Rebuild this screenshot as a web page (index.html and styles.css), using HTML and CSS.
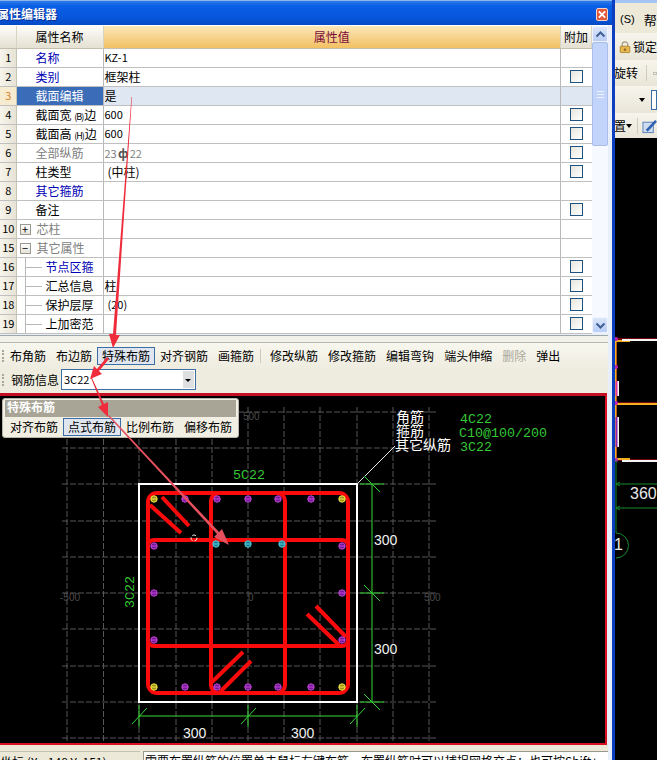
FILE: index.html
```html
<!DOCTYPE html>
<html lang="zh-CN">
<head>
  <meta charset="UTF-8" />
  <title>属性编辑器</title>
  <link rel="stylesheet" href="styles.css">
</head>
<body>

  <div class="editor">
    <div class="titlebar">
      <span class="title-text">属性编辑器</span>
      <span class="close-btn">
        <svg width="11" height="11" viewBox="0 0 11 11"><path d="M2 2L9 9M9 2L2 9" stroke="#fff" stroke-width="2" fill="none"/></svg>
      </span>
    </div>

    <div class="editor-body">
      <div class="grid">
        <table class="props">
          <colgroup>
            <col class="c-num"><col class="c-name"><col class="c-value"><col class="c-extra">
          </colgroup>
          <thead>
            <tr>
              <th></th>
              <th>属性名称</th>
              <th class="th-value">属性值</th>
              <th>附加</th>
            </tr>
          </thead>
          <tbody>
            <tr><td class="num">1</td><td class="name link">名称</td><td class="latin">KZ-1</td><td></td></tr>
            <tr><td class="num">2</td><td class="name link">类别</td><td>框架柱</td><td class="chk"><span class="box"></span></td></tr>
            <tr class="current"><td class="num">3</td><td class="name">截面编辑</td><td>是</td><td></td></tr>
            <tr><td class="num">4</td><td class="name">截面宽 <span class="squeezed">(B)</span>边</td><td class="latin">600</td><td class="chk"><span class="box"></span></td></tr>
            <tr><td class="num">5</td><td class="name">截面高 <span class="squeezed">(H)</span>边</td><td class="latin">600</td><td class="chk"><span class="box"></span></td></tr>
            <tr class="muted"><td class="num">6</td><td class="name">全部纵筋</td><td class="latin">23<span class="bar-mark">ф</span>22</td><td class="chk"><span class="box"></span></td></tr>
            <tr><td class="num">7</td><td class="name">柱类型</td><td><span class="paren">(中柱)</span></td><td class="chk"><span class="box"></span></td></tr>
            <tr><td class="num">8</td><td class="name link">其它箍筋</td><td></td><td></td></tr>
            <tr><td class="num">9</td><td class="name">备注</td><td></td><td class="chk"><span class="box"></span></td></tr>
            <tr class="muted"><td class="num">10</td><td class="name"><span class="toggle">+</span>芯柱</td><td></td><td></td></tr>
            <tr class="muted"><td class="num">15</td><td class="name"><span class="toggle">−</span>其它属性</td><td></td><td></td></tr>
            <tr><td class="num">16</td><td class="name sub link">节点区箍</td><td></td><td class="chk"><span class="box"></span></td></tr>
            <tr><td class="num">17</td><td class="name sub">汇总信息</td><td>柱</td><td class="chk"><span class="box"></span></td></tr>
            <tr><td class="num">18</td><td class="name sub">保护层厚</td><td class="latin"><span class="paren">(20)</span></td><td class="chk"><span class="box"></span></td></tr>
            <tr><td class="num">19</td><td class="name sub">上加密范</td><td></td><td class="chk"><span class="box"></span></td></tr>
          </tbody>
        </table>

        <div class="scrollbar">
          <div class="sb-btn">
            <svg width="11" height="7" viewBox="0 0 11 7"><path d="M1.5 5.5L5.5 1.5L9.5 5.5" stroke="#3f5f95" stroke-width="2" fill="none"/></svg>
          </div>
          <div class="sb-thumb"><span class="sb-grip"></span></div>
          <div class="sb-track"></div>
          <div class="sb-btn">
            <svg width="11" height="7" viewBox="0 0 11 7"><path d="M1.5 1.5L5.5 5.5L9.5 1.5" stroke="#3f5f95" stroke-width="2" fill="none"/></svg>
          </div>
        </div>
      </div>

      <div class="splitter"></div>

      <div class="toolbar">
        <span class="grip"></span>
        <span class="tool">布角筋</span>
        <span class="tool">布边筋</span>
        <span class="tool active">特殊布筋</span>
        <span class="tool">对齐钢筋</span>
        <span class="tool">画箍筋</span>
        <span class="tool-sep"></span>
        <span class="tool">修改纵筋</span>
        <span class="tool">修改箍筋</span>
        <span class="tool">编辑弯钩</span>
        <span class="tool">端头伸缩</span>
        <span class="tool disabled">删除</span>
        <span class="tool">弹出</span>
      </div>
      <div class="toolbar toolbar-info">
        <span class="grip"></span>
        <span class="info-label">钢筋信息</span>
        <span class="combo">
          <span class="combo-value">3C22</span>
          <span class="combo-arrow"></span>
        </span>
      </div>

      <div class="canvas">
        <svg class="drawing" width="605" height="347" viewBox="0 396 605 347">
          <defs>
            <g id="bar"><circle r="3.2"/><path d="M-3 0H3"/></g>
          </defs>

          <g class="axis-grid">
            <path d="M67 407V743M103.500 407V743M139 407V743M176 407V743M212 407V743M248 407V743M284 407V743M320 407V743M357 407V743M393 407V743M429 407V743"/>
            <path d="M62 412H436M62 448H436M62 484H436M62 521H436M62 557H436M62 593H436M62 629H436M62 666H436M62 702H436M62 738H436"/>
          </g>
          <text class="axis-label" x="60" y="601">-500</text>
          <text class="axis-label" x="424" y="601">500</text>
          <text class="axis-label" x="243" y="420">500</text>
          <text class="axis-label" x="248" y="601">0</text>

          <rect class="outline" x="139" y="484" width="218" height="218"/>
          <path class="leader" d="M357 484L395 446"/>

          <g class="dim">
            <path d="M372 484V702M360 484H384M360 593H384M360 702H384M364 476L380 492M364 585L380 601M364 694L380 710"/>
            <path d="M139 716H357M139 705V727M248 705V727M357 705V727M132 724L147 708M241 724L256 708M350 724L365 708"/>
          </g>

          <g class="stirrup">
            <rect x="148" y="493" width="200" height="200" rx="9"/>
            <rect x="211" y="493" width="74" height="200" rx="8"/>
            <rect x="148" y="540" width="200" height="106" rx="6"/>
            <path d="M150 505L181 533M162 497L189 526"/>
            <path d="M307 614L339 645M316 606L346 637"/>
            <path d="M212 682L243 652M220 692L251 661"/>
          </g>

          <g class="bars-side">
            <use href="#bar" x="185" y="499"/><use href="#bar" x="217" y="499"/><use href="#bar" x="248" y="499"/>
            <use href="#bar" x="278" y="499"/><use href="#bar" x="311" y="499"/>
            <use href="#bar" x="185" y="687"/><use href="#bar" x="217" y="687"/><use href="#bar" x="248" y="687"/>
            <use href="#bar" x="278" y="687"/><use href="#bar" x="311" y="687"/>
            <use href="#bar" x="154" y="546"/><use href="#bar" x="154" y="593"/><use href="#bar" x="154" y="640"/>
            <use href="#bar" x="342" y="546"/><use href="#bar" x="342" y="593"/><use href="#bar" x="342" y="640"/>
          </g>
          <g class="bars-corner">
            <use href="#bar" x="154" y="499"/><use href="#bar" x="342" y="499"/>
            <use href="#bar" x="154" y="687"/><use href="#bar" x="342" y="687"/>
          </g>
          <g class="bars-new">
            <use href="#bar" x="216" y="544"/><use href="#bar" x="248" y="544"/><use href="#bar" x="282" y="544"/>
          </g>
          <circle class="cursor-mark" cx="194" cy="538" r="3"/>

          <text class="dim-text" x="183" y="738">300</text>
          <text class="dim-text" x="291" y="738">300</text>
          <text class="dim-text" x="374" y="545">300</text>
          <text class="dim-text" x="374" y="654">300</text>
          <text class="legend-value" x="233" y="479">5C22</text>
          <text class="legend-value" transform="translate(134 608) rotate(-90)">3C22</text>

          <text class="legend" x="396" y="422">角筋</text>
          <text class="legend" x="396" y="436">箍筋</text>
          <text class="legend" x="395" y="450">其它纵筋</text>
          <text class="legend-value" x="460" y="423">4C22</text>
          <text class="legend-value" x="459" y="437">C10@100/200</text>
          <text class="legend-value" x="460" y="451">3C22</text>
        </svg>

        <div class="float-panel">
          <div class="float-title">特殊布筋</div>
          <div class="float-tools">
            <span class="tool">对齐布筋</span>
            <span class="tool active">点式布筋</span>
            <span class="tool">比例布筋</span>
            <span class="tool">偏移布筋</span>
          </div>
        </div>
      </div>

      <div class="statusbar">
        <span class="status-pos">坐标 (X: -148 Y: 151)</span>
        <span class="status-hint">需要布置纵筋的位置单击鼠标左键布筋，布置纵筋时可以捕捉网格交点；也可按Shift+</span>
      </div>
    </div>
  </div>

  <div class="side">
    <div class="side-row side-menu"><span class="side-s">(S)</span><span>帮</span></div>
    <div class="side-row side-lock">
      <svg width="15" height="16" viewBox="0 0 15 16">
        <path d="M4 8V5a3.500 3.500 0 0 1 7 0V8" fill="none" stroke="#a09a80" stroke-width="1.500"/>
        <rect x="1.500" y="7" width="12" height="8" rx="1" fill="#e8b850" stroke="#a87820"/>
        <path d="M7.500 9.500V13M6 11.500H9" stroke="#6a4a10"/>
      </svg>
      <span>锁定</span>
    </div>
    <div class="side-row side-rotate"><span class="clip-left">旋转</span><span class="side-sep"></span><span class="side-dash"></span></div>
    <div class="side-row side-combo"><span class="drop"></span><span class="side-box"></span></div>
    <div class="side-row side-tools">
      <span class="clip-left">置</span><span class="drop"></span><span class="side-sep"></span>
      <svg width="16" height="16" viewBox="0 0 16 16">
        <rect x="1" y="4" width="11" height="11" fill="#cfdcf0" stroke="#5a7fb8"/>
        <path d="M4 12L14 1.500L16 3.500L6 14Z" fill="#2f62b0"/>
      </svg>
    </div>
    <svg class="side-view" width="42" height="622" viewBox="615 138 42 622">
      <path class="beam-red" d="M617 339H657M617 403H657M617 460H657M616 339V460"/>
      <path class="beam-yellow" d="M616 341H630M616 404H657M616 459H630M615.500 340V460"/>
      <path class="beam-white" d="M622 340H657M622 461H657M618 381V396M618 417V447"/>
      <path class="beam-pink" d="M616.500 381V396"/>
      <path class="beam-purple" d="M616.500 417V447"/>
      <circle class="beam-dot" cx="616" cy="339" r="2"/>
      <circle class="beam-dot" cx="616" cy="367" r="2"/>
      <circle class="beam-dot" cx="616" cy="403" r="2"/>
      <circle class="beam-dot" cx="616" cy="460" r="2"/>
      <path class="side-dim" d="M616 460V533M616 484H657M616 508H657M616 484L620 482M616 484L620 486M616 508L620 506M616 508L620 510"/>
      <path class="side-dim" d="M616 533A12 12 0 0 1 616 558"/>
      <text class="side-num" x="630" y="499">360</text>
      <text class="side-num" x="614" y="550">1</text>
    </svg>
  </div>

  <!-- red hand-drawn arrows over the screenshot -->
  <svg class="arrows" width="657" height="760" viewBox="0 0 657 760">
    <path class="arrow" d="M131.500 97L132 97L116 335L120 335L113 348L109 334L113 334Z"/>
    <path class="arrow" d="M107 357L109 359L99 371L102 374L90 379L94 366L97 369Z"/>
    <path class="arrow" d="M91 378L92 378L104 404L108 402L108 417L98 407L102 405Z"/>
    <path class="arrow-thin" d="M108 416L109 415L219 532L222 529L229 545L214 537L217 534Z"/>
  </svg>

</body>
</html>
```

FILE: styles.css
```css
* {
  box-sizing: border-box;
}

html, body {
  margin: 0;
  height: 760px;
  overflow: hidden;
}

body {
  display: flex;
  width: 657px;
  font-family: "Noto Sans CJK SC", sans-serif;
  font-size: 12px;
  line-height: 1;
  color: #000;
  background: #000;
  position: relative;
}

/* window */
.editor {
  width: 615px;
  height: 760px;
  display: flex;
  flex-direction: column;
  border-right: 3px solid #0b3fbf;
  background: #e8eefa;
}

.titlebar {
  height: 26px;
  flex: none;
  display: flex;
  justify-content: space-between;
  align-items: center;
  padding: 3px 4px 1px 0;
  border-top: 1px solid #8db4ec;
  border-bottom: 1px solid #fff;
  background: linear-gradient(#2f7bea, #0a5fe4 20%, #0756dc 70%, #0449c4);
}

.title-text {
  margin-left: -3px;
  color: #fff;
  font-weight: bold;
  text-shadow: 1px 1px 0 #0a2f90;
}

.close-btn {
  width: 12px;
  height: 13px;
  display: flex;
  align-items: center;
  justify-content: center;
  background: #e2583a;
  border: 1px solid #f3d6c8;
  border-radius: 2px;
}

.editor-body {
  flex: 1;
  display: flex;
  flex-direction: column;
  padding-right: 4px;
  min-height: 0;
}

/* property grid */
.grid {
  display: flex;
  height: 307px;
  flex: none;
  background: #fff;
}

.props {
  width: 592px;
  table-layout: fixed;
  border-collapse: collapse;
}

.c-num { width: 16px; }
.c-name { width: 87px; }
.c-extra { width: 31px; }

.props th {
  height: 22px;
  padding: 0;
  font-weight: normal;
  border-right: 1px solid #d8d4c4;
  border-bottom: 1px solid #c4bfae;
  background: linear-gradient(#fdfcf8, #e4e0d2);
}

.props .th-value {
  color: #7a0a3a;
  background: linear-gradient(#fbe6b8, #f2c062);
}

.props td {
  height: 19px;
  padding: 0 0 0 1px;
  overflow: hidden;
  white-space: nowrap;
  border-right: 1px solid #b8b8b8;
  border-bottom: 1px solid #c0c0c0;
}

.props td:last-child {
  border-right: 0;
}

.props .latin {
  font-size: 11px;
}

.paren {
  margin-left: 3px;
}

.props .num {
  padding: 0 0 0 1px;
  text-align: center;
  font-size: 11px;
  color: #000;
  background: linear-gradient(90deg, #f6f4ec, #e6e2d4);
  border-right: 1px solid #c8c4b4;
}

.props .name {
  padding-left: 19px;
}

.props .sub {
  padding-left: 29px;
  position: relative;
}

/* dotted tree lines in front of the child rows */
.props .sub::before {
  content: "";
  position: absolute;
  left: 8px;
  top: 0;
  bottom: 0;
  border-left: 1px solid #b8b8b8;
}

.props .sub::after {
  content: "";
  position: absolute;
  left: 9px;
  width: 16px;
  top: 9px;
  border-top: 1px solid #b8b8b8;
}

.link { color: #0000b4; }

.muted td { color: #808080; }
.muted .num { color: #000; }

.current td { background: #dfe7f3; }
.props .current .num {
  color: #d9822b;
  background: #f8ecd0;
}
.props .current .name {
  color: #fff;
  background: #3b6cb8;
}

.squeezed {
  font-size: 9px;
  letter-spacing: -1px;
  margin-right: 1px;
}

.bar-mark {
  display: inline-block;
  width: 13px;
  text-align: center;
  font-size: 12px;
  font-weight: bold;
  color: #555;
}

.toggle {
  float: left;
  width: 11px;
  height: 11px;
  margin: 1px 6px 0 -16px;
  border: 1px solid #9a9a90;
  background: linear-gradient(#fff, #e4e2d8);
  color: #000;
  font-size: 11px;
  line-height: 9px;
  text-align: center;
}

.box {
  display: block;
  width: 13px;
  height: 13px;
  margin: 0 0 0 8px;
  border: 1px solid #1c5180;
  background: linear-gradient(135deg, #e6e6de, #fff);
}

/* scrollbar */
.scrollbar {
  width: 16px;
  display: flex;
  flex-direction: column;
  background: #f6f9ff;
}

.sb-btn {
  height: 16px;
  flex: none;
  display: flex;
  align-items: center;
  justify-content: center;
  background: linear-gradient(#dbe6fb, #b9cdf6);
  border: 1px solid #eef3ff;
  border-radius: 2px;
}

.sb-thumb {
  height: 104px;
  flex: none;
  display: flex;
  align-items: center;
  justify-content: center;
  background: #c3d4fb;
  border: 1px solid #a9bee8;
  border-radius: 2px;
}

.sb-grip {
  width: 7px;
  height: 7px;
  border-top: 1px solid #eef3ff;
  border-bottom: 1px solid #eef3ff;
  background: linear-gradient(#eef3ff, #eef3ff) center / 100% 1px no-repeat;
}

.sb-track {
  flex: 1;
}

.splitter {
  height: 8px;
  flex: none;
  margin-top: 2px;
  border-top: 1px solid #9ea7a8;
  border-bottom: 1px solid #b4b8b0;
  background: #f2f1e8;
}

/* toolbars */
.toolbar {
  height: 26px;
  flex: none;
  display: flex;
  align-items: center;
  background: linear-gradient(#f8f7ef, #eeecdf);
}

.toolbar-info {
  height: 24px;
  padding-bottom: 3px;
  background: #eeecdf;
}

.grip {
  width: 3px;
  height: 12px;
  margin-left: 2px;
  border-left: 2px dotted #a8a698;
}

.tool {
  height: 18px;
  padding: 0 5px;
  display: inline-flex;
  align-items: center;
  white-space: nowrap;
}

.tool.active {
  padding: 0 4px;
  border: 1px solid #3a6ea5;
  background: #dfe6f0;
}

.tool.disabled {
  color: #aaa79a;
}

.tool-sep {
  width: 1px;
  height: 14px;
  margin: 0 4px 0 1px;
  background: #cdcabb;
}

.info-label {
  margin: 0 2px 0 6px;
}

.combo {
  width: 135px;
  height: 21px;
  display: flex;
  align-items: center;
  justify-content: space-between;
  padding: 0 1px 0 2px;
  font-size: 11px;
  border: 1px solid #3a6ea5;
  background: #fff;
}

.combo-arrow {
  width: 11px;
  height: 17px;
  background: #dedfe0;
  position: relative;
}

.combo-arrow::after {
  content: "";
  position: absolute;
  left: 2px;
  top: 8px;
  border: 3px solid transparent;
  border-top: 3px solid #000;
}

/* drawing area */
.canvas {
  height: 352px;
  flex: none;
  position: relative;
  background: #000;
  border-top: 3px solid #c40f22;
  border-right: 2px solid #d8101f;
  border-bottom: 2px solid #d8101f;
  margin-right: 1px;
}

.drawing {
  display: block;
}

.axis-grid path {
  fill: none;
  stroke: #565656;
  stroke-dasharray: 6 2;
}

.axis-label {
  font-family: "Liberation Sans", sans-serif;
  font-size: 10px;
  fill: #4a4a4a;
}

.outline {
  fill: none;
  stroke: #fff;
  stroke-width: 2;
}

.leader {
  stroke: #e8e8e8;
  fill: none;
}

.dim path {
  fill: none;
  stroke: #37d637;
}

.stirrup rect,
.stirrup path {
  fill: none;
  stroke: #fa0a0a;
  stroke-width: 4;
}

.bars-side { fill: #6a1f90; stroke: #d040e0; stroke-width: 1; }
.bars-corner { fill: #a09020; stroke: #f2ec40; stroke-width: 1; }
.bars-new { fill: #207c90; stroke: #4fd0e0; stroke-width: 1; }

.cursor-mark {
  fill: none;
  stroke: #f0f0f0;
  stroke-dasharray: 4 2;
}

.dim-text {
  font-family: "Liberation Sans", sans-serif;
  font-size: 14px;
  fill: #f2f2f2;
}

.legend {
  font-size: 14px;
  fill: #fff;
}

.legend-value {
  font-family: "Liberation Mono", monospace;
  font-size: 13.33px;
  fill: #35c835;
}

.float-panel {
  position: absolute;
  left: 2px;
  top: 2px;
  width: 237px;
  height: 40px;
  padding: 1px 2px;
  border-radius: 3px;
  border: 1px solid #b8b6a8;
  background: #f1efe4;
}

.float-title {
  height: 17px;
  padding: 0 0 3px 2px;
  display: flex;
  align-items: center;
  color: #fff;
  font-weight: bold;
  background: #a8a596;
}

.float-tools {
  display: flex;
  align-items: center;
  height: 18px;
  margin-top: 1px;
}

/* status line, cut by the bottom of the window */
.statusbar {
  flex: 1;
  display: flex;
  gap: 3px;
  padding-top: 6px;
  overflow: hidden;
  background: #ece9d8;
  white-space: nowrap;
}

.status-pos {
  width: 140px;
  flex: none;
  padding: 4px 0 0 0;
  border-top: 1px solid #c4c1b0;
}

.status-hint {
  flex: 1;
  padding: 3px 0 0 1px;
  overflow: hidden;
  border-top: 1px solid #9a988c;
  border-left: 1px solid #9a988c;
  background: #fff;
}

/* what shows of the main window behind */
.side {
  width: 42px;
  height: 760px;
  flex: none;
  display: flex;
  flex-direction: column;
  overflow: hidden;
  background: #000;
}

.side-row {
  flex: none;
  display: flex;
  align-items: center;
  height: 27px;
  white-space: nowrap;
  background: linear-gradient(#f7f5ec, #e9e6d8);
}

.side-menu {
  height: 33px;
  padding: 6px 0 0 5px;
  gap: 9px;
  font-size: 13px;
  background: linear-gradient(#a4c4f4 3px, #ece9d8 3px);
}

.side-s {
  font-family: "Liberation Sans", sans-serif;
  font-size: 11px;
}

.side-lock {
  padding-left: 4px;
  gap: 2px;
}

.side-rotate {
  height: 26px;
}

.side-combo {
  height: 27px;
  padding-left: 24px;
  gap: 6px;
}

.side-tools {
  height: 25px;
}

.clip-left {
  margin-left: -1px;
}

.side-sep {
  width: 1px;
  height: 16px;
  margin: 0 6px 0 8px;
  background: #cfccbc;
}

.side-dash {
  width: 6px;
  height: 3px;
  border: 1px solid #c4c2b8;
}

.drop {
  width: 0;
  height: 0;
  border: 3px solid transparent;
  border-top: 4px solid #000;
  margin-top: 3px;
}

.side-box {
  width: 8px;
  height: 20px;
  border: 1px solid #3a6ea5;
  background: #fff;
}

.side-tools .side-sep {
  margin: 0 4px 0 5px;
}

.side-view {
  display: block;
}

.beam-red,
.beam-yellow,
.beam-white,
.beam-pink,
.beam-purple {
  fill: none;
}

.beam-red { stroke: #e8101a; stroke-width: 1; }
.beam-yellow { stroke: #f5b020; stroke-width: 2; }
.beam-white { stroke: #f4f4f4; stroke-width: 2; }
.beam-pink { stroke: #e030a0; stroke-width: 2; }
.beam-purple { stroke: #9020b0; stroke-width: 2; }
.beam-dot { fill: #c020b0; }

.side-dim {
  fill: none;
  stroke: #178a30;
}

.side-num {
  font-family: "Liberation Sans", sans-serif;
  font-size: 16px;
  fill: #e8e8e8;
}

/* arrows sit over everything */
.arrows {
  position: absolute;
  left: 0;
  top: 0;
  pointer-events: none;
}

.arrow { fill: #ee2c3c; }
.arrow-thin { fill: #e4505e; }
```
